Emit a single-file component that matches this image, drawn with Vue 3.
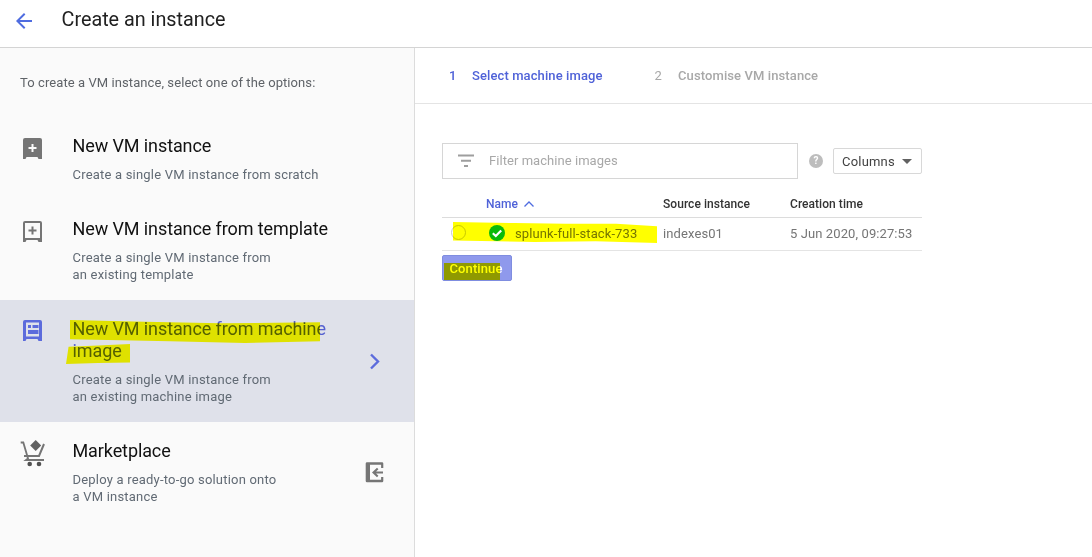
<script setup>
const options = [
  { id: 'new', title: 'New VM instance', desc: ['Create a single VM instance from scratch'] },
  { id: 'template', title: 'New VM instance from template', desc: ['Create a single VM instance from', 'an existing template'] },
  { id: 'image', title: 'New VM instance from machine image', desc: ['Create a single VM instance from', 'an existing machine image'], active: true },
  { id: 'market', title: 'Marketplace', desc: ['Deploy a ready-to-go solution onto', 'a VM instance'] }
]
</script>

<template>
  <div class="page">
    <header class="topbar">
      <svg class="back" width="24" height="24" viewBox="0 0 24 24"><path d="M20 11H7.800l5.600-5.600L12 4l-8 8 8 8 1.400-1.400L7.800 13H20z" fill="#4f6ce0"/></svg>
      <h1>Create an instance</h1>
    </header>
    <div class="body">
      <aside class="side">
        <p class="intro">To create a VM instance, select one of the options:</p>
        <div v-for="o in options" :key="o.id" class="option" :class="{ active: o.active }">
          <div class="opt-icon" :class="'icon-' + o.id">
            <svg v-if="o.id === 'new'" width="24" height="24" viewBox="0 0 24 24"><path fill-rule="evenodd" d="M5 2h15a2 2 0 0 1 2 2v19h-3.500l-1-2h-11l-1 2H3V4a2 2 0 0 1 2-2zm6.500 6v3h-3v2h3v3h2v-3h3v-2h-3V8z" fill="#757575"/></svg>
            <svg v-else-if="o.id === 'template'" width="24" height="24" viewBox="0 0 24 24"><path fill-rule="evenodd" d="M5 2h15a2 2 0 0 1 2 2v19h-3.500l-1-2h-11l-1 2H3V4a2 2 0 0 1 2-2zm0 2v15h15V4zm6.500 3.500h2v3h3v2h-3v3h-2v-3h-3v-2h3z" fill="#757575"/></svg>
            <svg v-else-if="o.id === 'image'" width="24" height="24" viewBox="0 0 24 24"><path fill-rule="evenodd" d="M5 2h15a2 2 0 0 1 2 2v19h-3.500l-1-2h-11l-1 2H3V4a2 2 0 0 1 2-2zm1 2.500V18.500h13V4.500zM8 7h3v3H8zm4.500 0h6v3h-6zM8 12h10.500v4H8z" fill="#5c6bdc"/></svg>
            <svg v-else width="28" height="30" viewBox="0 0 28 30"><path d="M17.700 3l5.500 5.500-5.500 5.500-5.500-5.500z" fill="#616161"/><path d="M2.700 5.500h2.600L10 21.500l-2 1.500h18" fill="none" stroke="#757575" stroke-width="1.800"/><path d="M26 7l-5 12H6" fill="none" stroke="#757575" stroke-width="2"/><circle cx="11.700" cy="27" r="2.300" fill="#515151"/><circle cx="21" cy="27" r="2.300" fill="#515151"/></svg>
          </div>
          <div class="opt-text">
            <div class="opt-title">{{ o.title }}</div>
            <div class="opt-desc"><div v-for="l in o.desc" :key="l">{{ l }}</div></div>
          </div>
          <svg v-if="o.id === 'image'" class="opt-trail chev" width="24" height="24" viewBox="0 0 24 24"><path d="M8 4.500l7 7-7 7" fill="none" stroke="#5c6bdc" stroke-width="2.400"/></svg>
          <svg v-if="o.id === 'market'" class="opt-trail exit" width="24" height="24" viewBox="0 0 24 24"><path fill-rule="evenodd" d="M5 1.300h15a1.300 1.300 0 0 1 1.300 1.300V7h-2.200V3.800H8v15h11.100V16h2.200v4a1.300 1.300 0 0 1-1.300 1.300H5A1.300 1.300 0 0 1 3.700 20V2.600A1.300 1.300 0 0 1 5 1.300zM15 6.800l1.400 1.400-2.300 2.300H21v2h-6.900l2.300 2.300-1.400 1.400-5-4.700z" fill="#757575"/></svg>
          <template v-if="o.id === 'image'">
            <span class="mark mark-a"></span>
            <span class="mark mark-b"></span>
          </template>
        </div>
      </aside>
      <main class="main">
        <div class="steps">
          <span class="num on">1</span><span class="step on">Select machine image</span>
          <span class="num off">2</span><span class="step off">Customise VM instance</span>
        </div>
        <div class="content">
          <div class="filter-row">
            <div class="filter">
              <svg width="18" height="14" viewBox="0 0 18 14"><path d="M1 1.500h16M4 6.800h10M7 12h4" stroke="#9e9e9e" stroke-width="2"/></svg>
              <span>Filter machine images</span>
            </div>
            <span class="help">?</span>
            <button class="columns">Columns<i></i></button>
          </div>
          <div class="table">
            <div class="row head">
              <span class="c-name name-head">Name
                <svg width="12" height="8" viewBox="0 0 12 8"><path d="M1.500 6.500 6 2l4.500 4.500" fill="none" stroke="#4f6ce0" stroke-width="1.300"/></svg>
              </span>
              <span class="c-src">Source instance</span>
              <span class="c-time">Creation time</span>
            </div>
            <div class="row data">
              <span class="radio"></span>
              <span class="img-name">splunk-full-stack-733</span>
              <span class="c-src">indexes01</span>
              <span class="c-time">5 Jun 2020, 09:27:53</span>
              <span class="mark mark-row"></span>
              <svg class="ok" width="16" height="16" viewBox="0 0 16 16"><circle cx="8" cy="8" r="8" fill="#0aba0a"/><path d="M3.800 8.200 6.800 11l5.400-5.600" fill="none" stroke="#fff" stroke-width="2.200"/></svg>
            </div>
          </div>
          <button class="continue"><b>Continue</b><span class="mark mark-btn"></span></button>
        </div>
      </main>
    </div>
  </div>
</template>

<style>
html, body { margin: 0; background: #fff; }
</style>

<style scoped>
.page { width: 1092px; height: 557px; overflow: hidden; font-family: Roboto, "Liberation Sans", sans-serif; color: #212121; display: flex; flex-direction: column; }
.topbar { height: 47px; flex: none; border-bottom: 1px solid #d4d4d4; display: flex; align-items: center; }
.back { margin: -6px 0 0 12px; }
.topbar h1 { margin: -7px 0 0 25.500px; font-size: 19.800px; font-weight: 400; color: #212121; line-height: 24px; }
.body { flex: 1; display: flex; min-height: 0; }
.side { width: 414px; flex: none; background: #fafafa; border-right: 1px solid #dcdcdc; }
.intro { margin: 0; height: 69px; box-sizing: border-box; padding: 26px 0 0 20px; font-size: 13px; letter-spacing: .08px; line-height: 17px; color: #5f6368; }
.option { position: relative; display: flex; padding: 18px 0 17px 18px; }
.option.active { background: #dfe1ea; }
.opt-icon { width: 54.500px; flex: none; display: flex; justify-content: flex-start; align-items: flex-start; }
.opt-icon svg { margin: 1px 0 0 2px; }
.icon-image svg { margin-top: 0; }
.icon-market svg { margin: -3px 0 0; }
.opt-text { width: 262px; flex: none; }
.opt-title { font-size: 18px; letter-spacing: -.1px; line-height: 22px; color: #111; }
.opt-desc { margin-top: 9px; font-size: 13px; letter-spacing: .2px; line-height: 17px; color: #616a74; }
.opt-trail { position: absolute; }
.chev { left: 363px; top: 50px; }
.exit { left: 362px; top: 39px; }
.mark { position: absolute; background: #ffff00; mix-blend-mode: multiply; }
.mark-a { left: 70px; top: 20px; width: 250px; height: 23px; clip-path: polygon(0 0, 30% 8%, 60% 14%, 100% 10%, 100% 92%, 70% 100%, 40% 92%, 0 84%); }
.mark-b { left: 66px; top: 44px; width: 64px; height: 20px; clip-path: polygon(4% 14%, 50% 8%, 100% 0, 100% 92%, 50% 95%, 0 100%); }
.option.active .opt-title { color: #5560d0; }
.main { flex: 1; min-width: 0; }
.steps { height: 55px; border-bottom: 1px solid #e4e4e4; display: flex; align-items: center; font-size: 13px; letter-spacing: .1px; font-weight: 500; }
.num { font-weight: 500; }
.num.on { margin-left: 34px; width: 23px; }
.num.off { margin-left: 52px; width: 23.500px; font-weight: 400; }
.on { color: #4f62d8; }
.off { color: #a8a8a8; }
.content { padding: 39px 0 0 27px; width: 480px; }
.filter-row { display: flex; align-items: center; height: 36px; }
.filter { width: 354px; height: 34px; flex: none; border: 1px solid #d6d6d6; display: flex; align-items: center; font-size: 13px; letter-spacing: .05px; color: #a8a8a8; }
.filter svg { margin-left: 14px; margin-right: 14px; margin-top: -1px; }
.filter span { margin-top: -1px; }
.help { margin-left: 11px; width: 14px; height: 14px; border-radius: 50%; background: #bdbdbd; color: #fff; font-size: 10px; font-weight: 700; line-height: 14px; text-align: center; }
.columns { margin-left: 10px; width: 89px; height: 26px; padding: 0 0 0 8px; border: 1px solid #d8d8d8; border-radius: 2px; background: #fff; font: 400 13px Roboto, sans-serif; letter-spacing: .2px; color: #424242; display: flex; align-items: center; }
.columns i { margin-left: 7px; border: 5px solid transparent; border-top-color: #616161; border-bottom: 0; }
.table { margin-top: 9px; width: 480px; font-size: 12px; }
.row { position: relative; display: flex; align-items: center; }
.head { height: 27px; padding-top: 2px; border-bottom: 1px solid #dcdcdc; font-weight: 500; font-size: 12px; letter-spacing: .05px; color: #333; }
.data { height: 30px; padding-bottom: 2px; border-bottom: 1px solid #e4e4e4; font-size: 13px; letter-spacing: .1px; color: #757575; }
.c-name { position: absolute; left: 44px; }
.name-head { color: #4f62d8; display: flex; align-items: center; gap: 5px; }
.c-src { position: absolute; left: 221px; }
.c-time { position: absolute; left: 348px; }
.mark-row { left: 11px; top: 4px; width: 204px; height: 21px; clip-path: polygon(0 0, 30% 5%, 55% 8%, 80% 8%, 100% 20%, 100% 100%, 70% 92%, 40% 95%, 0 88%); }
.radio { position: absolute; left: 9px; top: 7px; width: 13px; height: 13px; border: 1px solid #c8c8c8; border-radius: 50%; }
.ok { position: absolute; left: 47px; top: 7px; }
.img-name { position: absolute; left: 73px; color: #757575; }
.continue { position: relative; display: block; margin-top: 4px; width: 70px; height: 26px; padding: 0; border: 1px solid #7f8de0; border-radius: 2px; background: #8f99ec; overflow: hidden; }
.continue b { position: relative; font: 500 13px Roboto, sans-serif; letter-spacing: .1px; color: #fff; display: block; margin-left: -2px; }
.mark-btn { left: 1px; top: 7px; width: 56px; height: 18px; }
</style>
